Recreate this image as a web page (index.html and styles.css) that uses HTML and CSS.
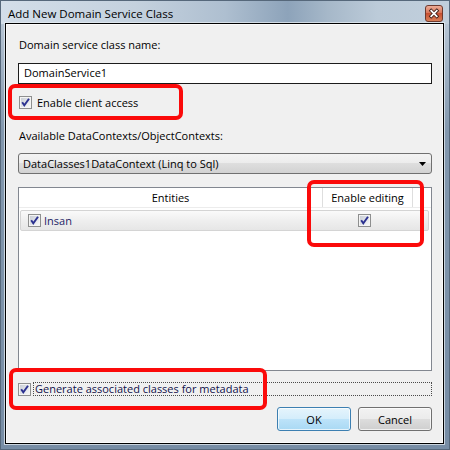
FILE: index.html
```html
<!DOCTYPE html>
<html>
<head>
<meta charset="utf-8">
<title>Add New Domain Service Class</title>
<link rel="stylesheet" href="styles.css">
</head>
<body>
<div class="window">
  <div class="titlebar">
    <span class="title">Add New Domain Service Class</span>
    <svg class="close" width="18" height="17" viewBox="0 0 18 17">
      <defs>
        <linearGradient id="closeg" x1="0" y1="0" x2="0" y2="1">
          <stop offset="0" stop-color="#eeb09b"/>
          <stop offset="0.45" stop-color="#d8765a"/>
          <stop offset="0.5" stop-color="#c74f31"/>
          <stop offset="1" stop-color="#d9825a"/>
        </linearGradient>
      </defs>
      <rect x="0.5" y="0.5" width="17" height="16" rx="2.5" fill="url(#closeg)" stroke="#6e3a2e"/>
      <path d="M6.2 5.7 L11.8 11.3 M11.8 5.7 L6.2 11.3" stroke="#3d1e17" stroke-width="3.4" stroke-linecap="square"/>
      <path d="M6.2 5.7 L11.8 11.3 M11.8 5.7 L6.2 11.3" stroke="#ffffff" stroke-width="1.7" stroke-linecap="square"/>
    </svg>
  </div>
  <div class="client">
    <div class="label l1">Domain service class name:</div>
    <div class="textbox">DomainService1</div>
    <div class="check c1">
      <svg class="cb" width="13" height="13" viewBox="0 0 13 13">
        <defs><linearGradient id="cbg1" x1="0" y1="0" x2="1" y2="1"><stop offset="0" stop-color="#c9ced6"/><stop offset="1" stop-color="#f7f7f8"/></linearGradient></defs>
        <rect x="0.5" y="0.5" width="12" height="12" fill="#f4f4f4" stroke="#8e8f8f"/>
        <rect x="2" y="2" width="9" height="9" fill="url(#cbg1)"/>
        <path d="M3.2 6.3 L5.3 9.4 L10 2.8" fill="none" stroke="#2b3190" stroke-width="1.9"/>
      </svg>
      <span>Enable client access</span>
    </div>
    <div class="label l2">Available DataContexts/ObjectContexts:</div>
    <div class="combo">
      <span>DataClasses1DataContext (Linq to Sql)</span>
      <svg class="arrow" width="7" height="4" viewBox="0 0 7 4"><path d="M0 0 H7 L3.5 4 Z" fill="#000"/></svg>
    </div>
    <div class="grid">
      <div class="ghead">
        <div class="hc entities">Entities</div>
        <div class="hc editing">Enable editing</div>
        <div class="hc filler"></div>
      </div>
      <div class="grow">
        <div class="gc entities">
          <svg class="cb" width="13" height="13" viewBox="0 0 13 13">
            <defs><linearGradient id="cbg2" x1="0" y1="0" x2="1" y2="1"><stop offset="0" stop-color="#c9ced6"/><stop offset="1" stop-color="#f7f7f8"/></linearGradient></defs>
            <rect x="0.5" y="0.5" width="12" height="12" fill="#f4f4f4" stroke="#8e8f8f"/>
            <rect x="2" y="2" width="9" height="9" fill="url(#cbg2)"/>
            <path d="M3.2 6.3 L5.3 9.4 L10 2.8" fill="none" stroke="#2b3190" stroke-width="1.9"/>
          </svg>
          <span class="insan">Insan</span>
        </div>
        <div class="gc editing">
          <svg class="cb" width="13" height="13" viewBox="0 0 13 13">
            <defs><linearGradient id="cbg3" x1="0" y1="0" x2="1" y2="1"><stop offset="0" stop-color="#c9ced6"/><stop offset="1" stop-color="#f7f7f8"/></linearGradient></defs>
            <rect x="0.5" y="0.5" width="12" height="12" fill="#f4f4f4" stroke="#8e8f8f"/>
            <rect x="2" y="2" width="9" height="9" fill="url(#cbg3)"/>
            <path d="M3.2 6.3 L5.3 9.4 L10 2.8" fill="none" stroke="#2b3190" stroke-width="1.9"/>
          </svg>
        </div>
      </div>
    </div>
    <div class="check c3">
      <svg class="cb" width="13" height="13" viewBox="0 0 13 13">
        <defs><linearGradient id="cbg4" x1="0" y1="0" x2="1" y2="1"><stop offset="0" stop-color="#c9ced6"/><stop offset="1" stop-color="#f7f7f8"/></linearGradient></defs>
        <rect x="0.5" y="0.5" width="12" height="12" fill="#f4f4f4" stroke="#8e8f8f"/>
        <rect x="2" y="2" width="9" height="9" fill="url(#cbg4)"/>
        <path d="M3.2 6.3 L5.3 9.4 L10 2.8" fill="none" stroke="#2b3190" stroke-width="1.9"/>
      </svg>
      <span class="focus">Generate associated classes for metadata</span>
    </div>
    <div class="buttons">
      <button class="btn ok">OK</button>
      <button class="btn">Cancel</button>
    </div>
  </div>
  <div class="mark m1"></div>
  <div class="mark m2"></div>
  <div class="mark m3"></div>
</div>
</body>
</html>
```
FILE: styles.css
```css
* {
  box-sizing: border-box;
}

html,
body {
  margin: 0;
  padding: 0;
}

body {
  width: 450px;
  height: 450px;
  overflow: hidden;
  font-family: "Open Sans", "Noto Sans", sans-serif;
  font-size: 11px;
  color: #000;
}

.window {
  position: relative;
  width: 450px;
  height: 450px;
  border: 1px solid #56687b;
  padding: 0 5px 5px 4px;
  display: flex;
  flex-direction: column;
  background:
    linear-gradient(90deg, #d3dee9 0%, #c4d1de 30%, #aebfd0 50%, #8da3ba 64%, #a6b8c9 73%, #bccbd9 84%, #c1cfdc 100%) top / 100% 23px no-repeat,
    linear-gradient(#c3d0dd 0, #a9b9ca 50px, #8398ae 130px, #778da5 100%);
}

.titlebar {
  height: 22px;
  flex-shrink: 0;
  display: flex;
  justify-content: space-between;
  align-items: flex-start;
  padding-left: 3px;
}

.title {
  margin-top: 5px;
  line-height: 16px;
  font-size: 11.5px;
  color: #000;
}

.close {
  display: block;
  margin-top: 4px;
  margin-right: 1px;
}

.client {
  flex: 1;
  border: 1px solid #000;
  background: #f0f0f0;
  padding: 0 11px 0 12px;
  display: flex;
  flex-direction: column;
  box-shadow: 0 0 0 1px rgba(230, 236, 242, 0.75), inset 0 0 0 1px #fbfbfb;
}

.client > * {
  flex-shrink: 0;
}

.label {
  margin-left: 1px;
  height: 16px;
  line-height: 16px;
}

.l1 {
  margin-top: 13px;
}

.textbox {
  margin-top: 10px;
  height: 21px;
  border: 1px solid #1c1c1c;
  background: #fff;
  padding-left: 5px;
  line-height: 18px;
}

.check {
  display: flex;
  align-items: center;
}

.cb {
  display: block;
  flex-shrink: 0;
}

.c1 {
  margin-top: 12px;
  height: 13px;
  margin-left: 1px;
  gap: 5px;
  line-height: 16px;
}

.l2 {
  margin-top: 19px;
}

.combo {
  margin-top: 9px;
  height: 21px;
  border: 1px solid #707070;
  border-radius: 3px;
  background: linear-gradient(#f3f3f3 0%, #ececec 50%, #dedede 50%, #d2d2d2 100%);
  display: flex;
  align-items: center;
  justify-content: space-between;
  padding: 0 5px 0 4px;
  line-height: 16px;
}

.arrow {
  display: block;
}

.grid {
  margin-top: 13px;
  height: 184px;
  border: 1px solid #828790;
  background: #fff;
}

.ghead {
  display: flex;
  height: 20px;
  border-bottom: 1px solid #ececec;
}

.hc {
  display: flex;
  align-items: center;
  justify-content: center;
  border-right: 1px solid #dedede;
  line-height: 16px;
}

.hc.entities {
  width: 304px;
}

.hc.editing {
  width: 90px;
}

.hc.filler {
  flex: 1;
  border-right: 0;
}

.grow {
  margin: 2px 0 0 1px;
  width: 409px;
  height: 21px;
  border: 1px solid #d4d4d4;
  border-radius: 2px;
  background: linear-gradient(#fafafa 0%, #efefef 50%, #e6e6e6 100%);
  display: flex;
  align-items: center;
}

.gc {
  display: flex;
  align-items: center;
}

.gc.entities {
  width: 301px;
  padding-left: 7px;
  gap: 3px;
  line-height: 16px;
}

.insan {
  color: #1d1d66;
}

.gc.editing {
  padding-left: 36px;
}

.c3 {
  margin-top: 11px;
  height: 14px;
}

.focus {
  margin-left: 2px;
  flex: 1;
  height: 14px;
  border: 1px dotted #4a4a4a;
  padding-left: 1px;
  line-height: 12px;
  color: #10104a;
}

.buttons {
  margin-top: 11px;
  display: flex;
  justify-content: flex-end;
  gap: 7px;
}

.btn {
  width: 74px;
  height: 24px;
  margin: 0;
  padding: 0;
  font-family: inherit;
  font-size: 11px;
  color: #000;
  border: 1px solid #707070;
  border-radius: 3px;
  background: linear-gradient(#f2f2f2 0%, #ebebeb 50%, #dddddd 50%, #cfcfcf 100%);
  box-shadow: inset 0 0 0 1px rgba(255, 255, 255, 0.7);
}

.btn.ok {
  border-color: #3c7fb1;
  background: linear-gradient(#e5f4fc 0%, #d4edfb 50%, #bde3f9 50%, #a9d9f4 100%);
}

.mark {
  position: absolute;
  border: 4px solid #fb0a0a;
  border-radius: 7px;
}

.m1 {
  left: 7px;
  top: 83px;
  width: 175px;
  height: 36px;
}

.m2 {
  left: 306px;
  top: 179px;
  width: 117px;
  height: 67px;
}

.m3 {
  left: 8px;
  top: 367px;
  width: 258px;
  height: 42px;
}
```
